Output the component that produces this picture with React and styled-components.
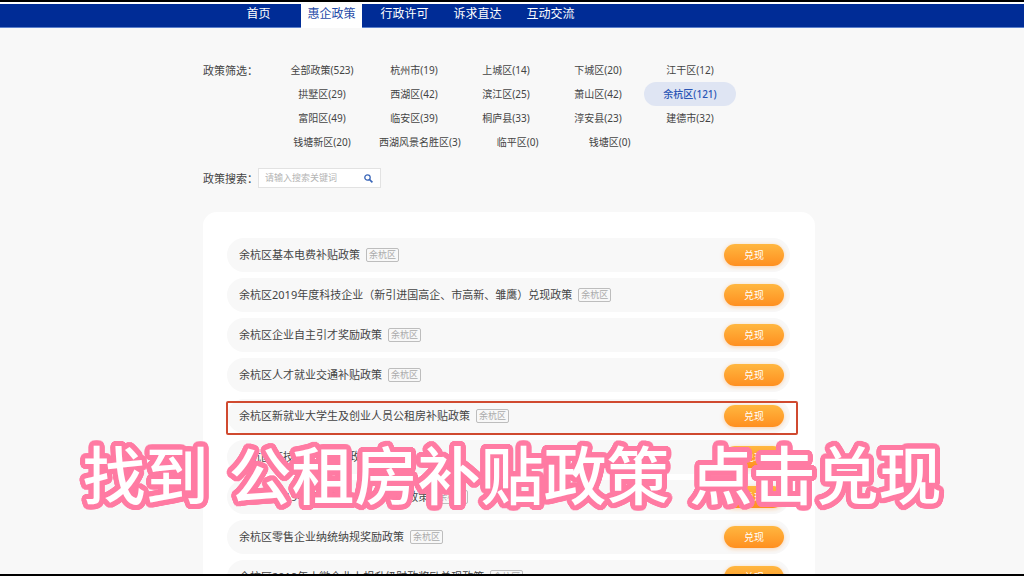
import React from "react";
import styled, { createGlobalStyle } from "styled-components";

const menus = ["首页", "惠企政策", "行政许可", "诉求直达", "互动交流"];

const areas = [
  ["全部政策(523)", "杭州市(19)", "上城区(14)", "下城区(20)", "江干区(12)"],
  ["拱墅区(29)", "西湖区(42)", "滨江区(25)", "萧山区(42)", "余杭区(121)"],
  ["富阳区(49)", "临安区(39)", "桐庐县(33)", "淳安县(23)", "建德市(32)"],
  ["钱塘新区(20)", "西湖风景名胜区(3)", "临平区(0)", "钱塘区(0)"],
];

const policies = [
  { title: "余杭区基本电费补贴政策" },
  { title: "余杭区2019年度科技企业（新引进国高企、市高新、雏鹰）兑现政策" },
  { title: "余杭区企业自主引才奖励政策" },
  { title: "余杭区人才就业交通补贴政策" },
  { title: "余杭区新就业大学生及创业人员公租房补贴政策", marked: true },
  { title: "余杭区高技能人才奖励政策" },
  { title: "余杭区2019年度高新技术企业奖励政策" },
  { title: "余杭区零售企业纳统纳规奖励政策" },
  { title: "余杭区2019年小微企业上规升级财政奖励兑现政策" },
];

const caption = ["找到", "公租房补贴政策", "点击兑现"];

// round outline made of shadows placed on a circle
const outline = (radius, color) =>
  Array.from({ length: 32 }, (_, i) => {
    const angle = (i / 32) * Math.PI * 2;
    const x = (Math.cos(angle) * radius).toFixed(2);
    const y = (Math.sin(angle) * radius).toFixed(2);
    return `${x}px ${y}px 0 ${color}`;
  }).join(", ");

const App = () => {
  const [menu, setMenu] = React.useState("惠企政策");
  const [area, setArea] = React.useState("余杭区(121)");
  const [keyword, setKeyword] = React.useState("");

  return (
    <Page>
      <GlobalStyle />
      <Header>
        <Nav>
          {menus.map((m) => (
            <NavLink
              key={m}
              href="#"
              $active={m === menu}
              onClick={() => setMenu(m)}
            >
              {m}
            </NavLink>
          ))}
        </Nav>
      </Header>

      <Main>
        <Filter>
          <FilterLabel>政策筛选：</FilterLabel>
          <div>
            {areas.map((line, i) => (
              <AreaLine key={i}>
                {line.map((a) => (
                  <AreaButton
                    key={a}
                    type="button"
                    $active={a === area}
                    onClick={() => setArea(a)}
                  >
                    {a}
                  </AreaButton>
                ))}
              </AreaLine>
            ))}
          </div>
        </Filter>

        <Search onSubmit={(e) => e.preventDefault()}>
          <SearchLabel htmlFor="keyword">政策搜索：</SearchLabel>
          <SearchBox>
            <SearchInput
              id="keyword"
              type="text"
              placeholder="请输入搜索关键词"
              value={keyword}
              onChange={(e) => setKeyword(e.target.value)}
            />
            <SearchButton type="submit" aria-label="搜索">
              <svg width="9" height="9" viewBox="0 0 9 9" fill="none">
                <circle
                  cx="3.5"
                  cy="3.5"
                  r="2.7"
                  stroke="#3a66b8"
                  strokeWidth="1.3"
                />
                <path d="M5.5 5.5L8.4 8.4" stroke="#3a66b8" strokeWidth="1.7" />
              </svg>
            </SearchButton>
          </SearchBox>
        </Search>

        <Card>
          {policies.map((p) => (
            <Row key={p.title} $marked={p.marked}>
              <Title href="#">{p.title}</Title>
              <Tag>余杭区</Tag>
              <CashButton type="button">兑现</CashButton>
            </Row>
          ))}
        </Card>
      </Main>

      <Caption>
        {caption.map((c) => (
          <span key={c}>{c}</span>
        ))}
      </Caption>
    </Page>
  );
};

const GlobalStyle = createGlobalStyle`
  * {
    box-sizing: border-box;
  }

  body {
    margin: 0;
    background-color: #f8f8f8;
  }

  body, button, input {
    font-family: "Noto Sans", "Noto Sans CJK SC", sans-serif;
  }
`;

const Page = styled.div`
  position: relative;
  height: 100vh;
  overflow: hidden;
  border-top: 2px solid #000;
  border-bottom: 2px solid #000;
  color: #444;
`;

const Header = styled.header`
  margin-top: 2px;
  padding-right: 6px;
  background-color: #002c96;
  border-bottom: 1px solid #5b80cc;
  box-shadow: 0 -2px 0 #fff;
`;

const Nav = styled.nav`
  display: flex;
  gap: 12px;
  max-width: 612px;
  margin: 0 auto;
  padding-left: 25px;
`;

const NavLink = styled.a`
  width: 61px;
  height: 24px;
  margin-bottom: -1px;
  font-size: 12px;
  line-height: 20px;
  text-align: center;
  text-decoration: none;
  color: ${(props) => (props.$active ? "#1f4ba8" : "#fff")};
  background-color: ${(props) => (props.$active ? "#fff" : "transparent")};
`;

const Main = styled.main`
  padding: 30px 6px 0 0;

  & > * {
    max-width: 612px;
    margin: 0 auto;
  }
`;

const Filter = styled.section`
  display: flex;
`;

const FilterLabel = styled.div`
  width: 73px;
  font-size: 11px;
  line-height: 26px;
`;

const AreaLine = styled.div`
  display: flex;
`;

const AreaButton = styled.button`
  min-width: 92px;
  height: 24px;
  padding: 0 11px;
  border: 0;
  border-radius: 12px;
  font-size: 10px;
  line-height: 24px;
  white-space: nowrap;
  cursor: pointer;
  font-weight: ${(props) => (props.$active ? 500 : 400)};
  color: ${(props) => (props.$active ? "#2a55b5" : "#444")};
  background-color: ${(props) => (props.$active ? "#dfe5f3" : "transparent")};
`;

const Search = styled.form`
  display: flex;
  align-items: flex-start;
  padding-top: 14px;
`;

const SearchLabel = styled.label`
  width: 55px;
  font-size: 11px;
  line-height: 22px;
`;

const SearchBox = styled.div`
  display: flex;
  align-items: center;
  width: 123px;
  height: 20px;
  border: 1px solid #e2e2e2;
  background-color: #fff;
`;

const SearchInput = styled.input`
  flex: 1;
  min-width: 0;
  padding: 0 0 0 6px;
  border: 0;
  outline: none;
  background: none;
  font-size: 9px;
  line-height: 18px;

  &::placeholder {
    color: #b4b4b4;
  }
`;

const SearchButton = styled.button`
  display: flex;
  align-items: center;
  justify-content: center;
  width: 24px;
  height: 18px;
  padding: 0;
  border: 0;
  background: none;
  cursor: pointer;
`;

const Card = styled.ul`
  display: flex;
  flex-direction: column;
  gap: 6px;
  && {
    margin-top: 22px;
  }
  padding: 26px 25px 25px 24px;
  border-radius: 14px;
  background-color: #fff;
  list-style: none;
`;

const Row = styled.li`
  position: relative;
  display: flex;
  align-items: center;
  gap: 6px;
  height: 34px;
  margin: ${(props) => (props.$marked ? "1px 0" : "0")};
  padding: 0 6px 0 12px;
  border-radius: 17px;
  background-color: #f8f8f8;

  &::after {
    content: "";
    display: ${(props) => (props.$marked ? "block" : "none")};
    position: absolute;
    top: 2px;
    right: -8px;
    bottom: -2px;
    left: -1px;
    border: 2px solid #d04a30;
    border-radius: 2px;
    pointer-events: none;
  }
`;

const Title = styled.a`
  font-size: 11px;
  line-height: 16px;
  color: #444;
  text-decoration: none;
  white-space: nowrap;
`;

const Tag = styled.span`
  height: 14px;
  padding: 0 2px;
  border: 1px solid #bdbdbd;
  border-radius: 2px;
  font-size: 9px;
  line-height: 12px;
  color: #aaa;
  white-space: nowrap;
`;

const CashButton = styled.button`
  width: 60px;
  height: 22px;
  margin-left: auto;
  padding: 0;
  border: 0;
  border-radius: 11px;
  font-size: 10px;
  line-height: 22px;
  color: #fff;
  background: linear-gradient(#ffb740, #ff8f1f);
  box-shadow: 0 1px 4px rgba(255, 150, 50, 0.4);
  cursor: pointer;
`;

const Caption = styled.div`
  position: absolute;
  right: 0;
  bottom: 66px;
  left: 0;
  display: flex;
  justify-content: center;
  gap: 20px;
  font-family: "Noto Sans CJK SC", sans-serif;
  font-size: 63px;
  font-weight: 500;
  line-height: 72px;
  white-space: nowrap;
  color: #fff;
  text-shadow: ${outline(5, "#ff7ba3")}, ${outline(3, "#ff7ba3")};
  pointer-events: none;
`;

export default App;
